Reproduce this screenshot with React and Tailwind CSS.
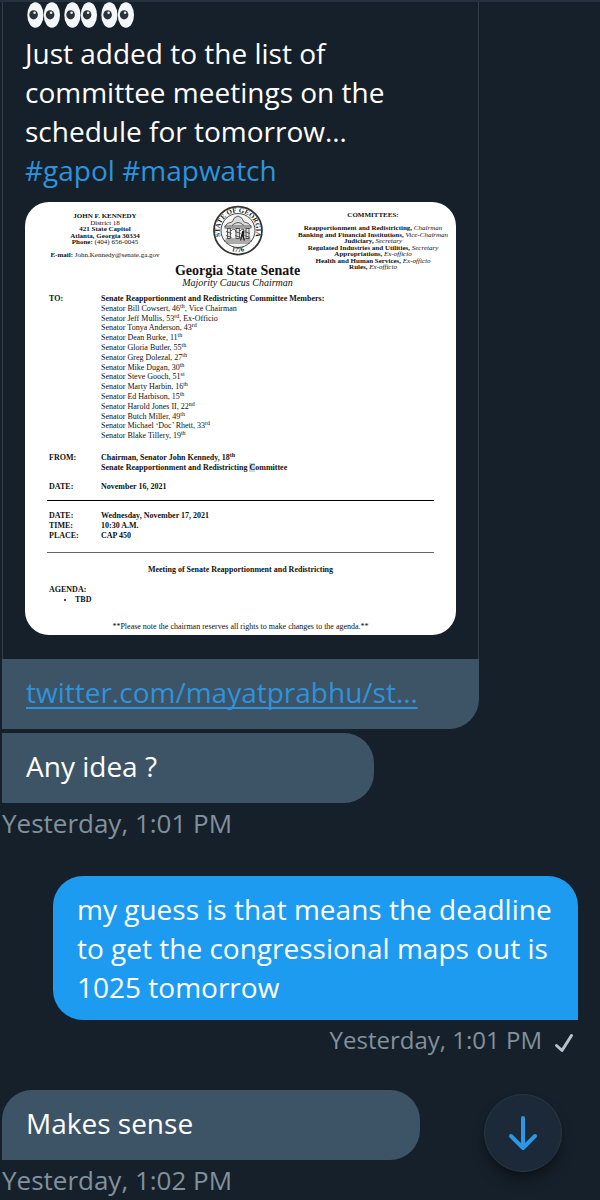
/**
 * DIRECT MESSAGE THREAD
 *
 * - Shared tweet card with its attached memo and link
 * - Incoming and outgoing message bubbles with timestamps
 * - Floating button that scrolls to the newest message
 */

const LEFT_LINES = [
  { bold: 'JOHN F. KENNEDY' },
  { text: 'District 18' },
  { bold: '421 State Capitol' },
  { bold: 'Atlanta, Georgia 30334' },
  { bold: 'Phone:', text: ' (404) 656-0045' },
  {},
  { bold: 'E-mail:', text: ' John.Kennedy@senate.ga.gov' },
];

const COMMITTEES = [
  { name: 'Reapportionment and Redistricting,', role: 'Chairman' },
  { name: 'Banking and Financial Institutions,', role: 'Vice-Chairman' },
  { name: 'Judiciary,', role: 'Secretary' },
  { name: 'Regulated Industries and Utilities,', role: 'Secretary' },
  { name: 'Appropriations,', role: 'Ex-officio' },
  { name: 'Health and Human Services,', role: 'Ex-officio' },
  { name: 'Rules,', role: 'Ex-officio' },
];

const SENATORS = [
  { name: 'Bill Cowsert', district: 46, suffix: 'th', note: ', Vice Chairman' },
  { name: 'Jeff Mullis', district: 53, suffix: 'rd', note: ', Ex-Officio' },
  { name: 'Tonya Anderson', district: 43, suffix: 'rd' },
  { name: 'Dean Burke', district: 11, suffix: 'th' },
  { name: 'Gloria Butler', district: 55, suffix: 'th' },
  { name: 'Greg Dolezal', district: 27, suffix: 'th' },
  { name: 'Mike Dugan', district: 30, suffix: 'th' },
  { name: 'Steve Gooch', district: 51, suffix: 'st' },
  { name: 'Marty Harbin', district: 16, suffix: 'th' },
  { name: 'Ed Harbison', district: 15, suffix: 'th' },
  { name: 'Harold Jones II', district: 22, suffix: 'nd' },
  { name: 'Butch Miller', district: 49, suffix: 'th' },
  { name: 'Michael ‘Doc’ Rhett', district: 33, suffix: 'rd' },
  { name: 'Blake Tillery', district: 19, suffix: 'th' },
];

// Pair of eyes looking left
function Eyes() {
  return (
    <svg viewBox="0 0 34 26" className="w-[34px] h-[26px]" aria-hidden="true">
      {[8.4, 24.9].map(cx => (
        <g key={cx}>
          <ellipse cx={cx} cy="13" rx="8.1" ry="12.8" fill="#f3f7fa" />
          <ellipse cx={cx - 1.8} cy="12.8" rx="4.3" ry="4.6" fill="#2b3338" />
          <circle cx={cx - 0.8} cy="10.8" r="1.3" fill="#e4eaee" />
        </g>
      ))}
    </svg>
  );
}

function StateSeal() {
  return (
    <svg viewBox="0 0 100 100" className="w-[50px] h-[51px]" role="img" aria-label="State seal">
      <defs>
        <path id="seal-top" d="M 18 68 A 36.500 36.500 0 1 1 82 68" />
        <path id="seal-bottom" d="M 30 88 A 43 43 0 0 0 70 88" />
      </defs>
      <circle cx="50" cy="50" r="48" fill="#fff" stroke="#333" strokeWidth="3.5" />
      <circle cx="50" cy="50" r="34" fill="#f4f4f4" stroke="#333" strokeWidth="1.8" />
      <text fontSize="14" fontWeight="700" fill="#222" fontFamily="Liberation Serif, serif">
        <textPath href="#seal-top" startOffset="50%" textAnchor="middle">STATE OF GEORGIA</textPath>
      </text>
      <text fontSize="13" fontWeight="700" fill="#222" fontFamily="Liberation Serif, serif">
        <textPath href="#seal-bottom" startOffset="50%" textAnchor="middle">1776</textPath>
      </text>
      {/* Arch and pediment */}
      <g fill="#ddd" stroke="#333" strokeWidth="1.5">
        <path d="M24 42 Q27 34 38 33 Q42 22 50 21 Q58 22 62 33 Q73 34 76 42 Z" />
        <path d="M38 40 Q50 28 62 40" fill="none" />
        <rect x="24" y="41" width="52" height="4" />
        <rect x="29" y="46" width="6" height="20" />
        <rect x="46" y="46" width="7" height="20" />
        <rect x="66" y="46" width="6" height="20" />
        <path d="M25 67 H75 M22 71 H78 M27 75 H73" />
        <path d="M36 51 Q41 44 46 51 M54 51 Q60 44 65 51" fill="none" />
      </g>
      {/* Soldier and scrolls */}
      <path d="M58 52 l3 -3 2 4 -1 8 2 9 h-3 l-2 -8 -3 8 h-2 l2 -10 z" fill="#222" />
      <path d="M26 52 l11 4 M26 60 l11 4 M44 52 l11 4 M44 60 l11 4 M63 52 l11 4 M63 60 l11 4" stroke="#444" strokeWidth="1.8" />
    </svg>
  );
}

function Memo() {
  return (
    <article className="rounded-3xl bg-white text-[#111] font-['Liberation_Serif',serif] text-[8px] leading-[9px] pb-[3px] overflow-hidden">
      {/* Letterhead */}
      <header className="grid grid-cols-[minmax(0,160fr)_minmax(0,105fr)_minmax(0,166fr)] h-[92px] whitespace-nowrap text-center text-[7px] leading-[6px]">
        <div className="grid auto-rows-fr h-[46px] mt-[11px]">
          {LEFT_LINES.map((line, i) => (
            <p key={i}>
              <strong>{line.bold}</strong>
              {line.text}
            </p>
          ))}
        </div>
        <div className="flex flex-col items-center pt-[3px]">
          <StateSeal />
          <h1 className="mt-2 text-[14px] leading-[14px] font-bold">Georgia State Senate</h1>
          <p className="text-[10px] leading-[9px] italic">Majority Caucus Chairman</p>
        </div>
        <div className="grid auto-rows-fr h-[59px] mt-[10px]">
          <h2 className="font-bold">COMMITTEES:</h2>
          <span />
          {COMMITTEES.map(({ name, role }) => (
            <p key={name}>
              <strong>{name}</strong> <em>{role}</em>
            </p>
          ))}
        </div>
      </header>

      {/* Recipients */}
      <div className="px-6">
        <div className="grid grid-cols-[52px_1fr]">
          <strong>TO:</strong>
          <div className="grid auto-rows-fr h-[147px]">
            <strong>Senate Reapportionment and Redistricting Committee Members:</strong>
            {SENATORS.map(({ name, district, suffix, note }) => (
              <p key={name}>
                Senator {name}, {district}
                <sup className="text-[6px] leading-none">{suffix}</sup>
                {note}
              </p>
            ))}
          </div>
        </div>

        <div className="grid grid-cols-[52px_1fr] mt-3 leading-[10px] font-bold">
          <span>FROM:</span>
          <p>
            Chairman, Senator John Kennedy, 18<sup className="text-[6px] leading-none">th</sup>
            <br />
            Senate Reapportionment and Redistricting <span className="bg-[#b9dcf5]">C</span>ommittee
          </p>
          <span className="mt-[9px]">DATE:</span>
          <span className="mt-[9px]">November 16, 2021</span>
        </div>
      </div>

      {/* Meeting details */}
      <hr className="mx-[22px] mt-2 border-t border-black" />
      <div className="grid grid-cols-[52px_1fr] px-6 mt-[10px] leading-[10px] font-bold">
        <span>DATE:</span>
        <span>Wednesday, November 17, 2021</span>
        <span>TIME:</span>
        <span>10:30 A.M.</span>
        <span>PLACE:</span>
        <span>CAP 450</span>
      </div>
      <hr className="mx-[22px] mt-[11px] border-t border-[#666]" />

      <h2 className="mt-3 text-center font-bold leading-[10px]">
        Meeting of Senate Reapportionment and Redistricting
      </h2>
      <div className="px-6 mt-[10px] font-bold leading-[10px]">
        <h3>AGENDA:</h3>
        <ul className="list-disc pl-[26px]">
          <li>TBD</li>
        </ul>
      </div>
      <p className="mt-[17px] text-center leading-[10px]">
        **Please note the chairman reserves all rights to make changes to the agenda.**
      </p>
    </article>
  );
}

function SharedTweet() {
  return (
    <section className="w-full max-w-[477px]">
      <div className="border-x border-[#2f3d49] px-[22px] pb-6">
        <div className="flex gap-[3px] h-8 pl-0.5" role="img" aria-label="eyes eyes eyes">
          <Eyes />
          <Eyes />
          <Eyes />
        </div>
        <p>
          Just added to the list of
          <br />
          committee meetings on the
          <br />
          schedule for tomorrow…
          <br />
          <a href="#gapol" className="text-[#2d93dc]">#gapol</a>{' '}
          <a href="#mapwatch" className="text-[#2d93dc]">#mapwatch</a>
        </p>
        <div className="mt-3">
          <Memo />
        </div>
      </div>
      <div className="rounded-br-[30px] bg-[#3d5466] px-6 pt-[14px] pb-[17px]">
        <a href="#status" className="text-[#2d93dc] underline decoration-2 underline-offset-4 [text-decoration-skip-ink:none]">
          twitter.com/mayatprabhu/st…
        </a>
      </div>
    </section>
  );
}

function Timestamp({ children, className = 'text-[26px]' }) {
  return <time className={`leading-[39px] text-[#81919d] ${className}`}>{children}</time>;
}

export default function App() {
  return (
    <main className="relative min-h-screen overflow-hidden bg-[#16202a] border-t-2 border-[#25313c] pl-0.5 font-['Open_Sans',sans-serif] text-[28px] leading-[39px] text-white">
      <SharedTweet />

      <div className="mt-1 w-full max-w-[372px] rounded-r-[30px] bg-[#3d5466] px-6 pt-[14px] pb-[17px]">
        Any idea ?
      </div>
      <Timestamp>Yesterday, 1:01 PM</Timestamp>

      {/* Outgoing message */}
      <div className="mt-[33px] mr-[22px] flex flex-col items-end">
        <div className="w-full max-w-[525px] rounded-[30px] rounded-br-none bg-[#1d9bf0] px-6 pt-[14px] pb-[13px]">
          my guess is that means the deadline
          <br />
          to get the congressional maps out is
          <br />
          1025 tomorrow
        </div>
        <div className="flex items-center gap-3 pr-1">
          <Timestamp className="text-[24px]">Yesterday, 1:01 PM</Timestamp>
          <svg viewBox="0 0 20 20" className="w-5 h-5 mt-1.5" fill="none" stroke="#b9c1c8" strokeWidth="3" strokeLinecap="round" strokeLinejoin="round" aria-label="Sent">
            <path d="M2.500 12.500 L8 17.500 L17.500 2.500" />
          </svg>
        </div>
      </div>

      <div className="mt-[31px] w-full max-w-[418px] rounded-[30px] rounded-bl-none bg-[#3d5466] px-6 pt-[14px] pb-[17px]">
        Makes sense
      </div>
      <Timestamp>Yesterday, 1:02 PM</Timestamp>

      {/* Scroll to newest */}
      <button
        type="button"
        aria-label="Scroll to newest message"
        className="absolute right-[38px] bottom-7 flex items-center justify-center w-[78px] h-[78px] rounded-full border border-[#2a3744] bg-[#1c2938] shadow-lg shadow-black/40"
      >
        <svg viewBox="0 0 30 36" className="w-[30px] h-9" fill="none" stroke="#2b97e5" strokeWidth="4" strokeLinecap="round" strokeLinejoin="round">
          <path d="M15 3 V33 M3 21 L15 33 L27 21" />
        </svg>
      </button>
    </main>
  );
}
